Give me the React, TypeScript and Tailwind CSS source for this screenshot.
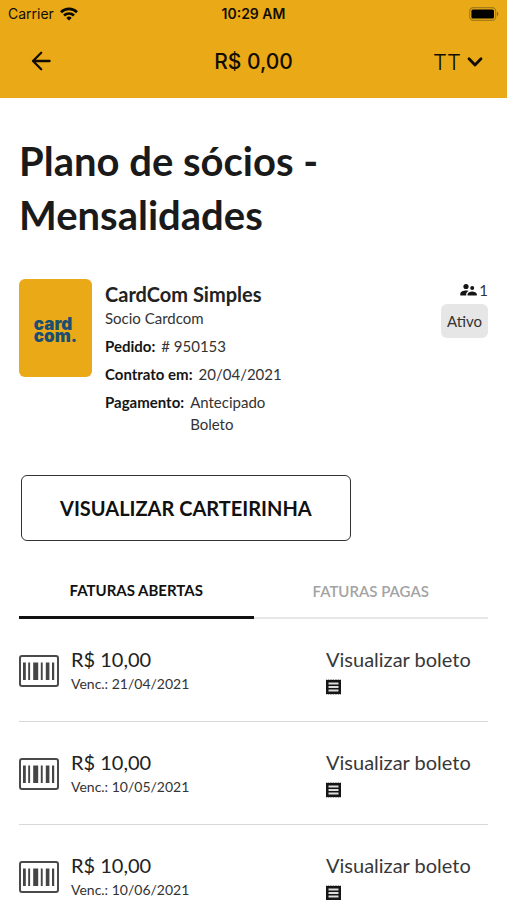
import { useState } from "react";

type Invoice = { amount: string; due: string };

const openInvoices: Invoice[] = [
  { amount: "R$ 10,00", due: "21/04/2021" },
  { amount: "R$ 10,00", due: "10/05/2021" },
  { amount: "R$ 10,00", due: "10/06/2021" },
];

function WifiIcon() {
  return (
    <svg width="18" height="14" viewBox="0 0 18 14" fill="none" stroke="#0c0902" strokeWidth="2.7" aria-hidden="true">
      <path d="M1 5.2a11.4 11.4 0 0 1 16 0" />
      <path d="M4 8.5a7.2 7.2 0 0 1 10 0" />
      <path d="M9 13.6 6.3 10.9a3.9 3.9 0 0 1 5.4 0z" fill="#0c0902" stroke="none" />
    </svg>
  );
}

function BatteryIcon() {
  return (
    <svg width="30" height="14" viewBox="0 0 30 14" fill="none" aria-hidden="true">
      <rect x="0.7" y="0.7" width="26" height="12.6" rx="3.6" stroke="#a67c18" strokeWidth="1.2" />
      <rect x="2.4" y="2.4" width="22.6" height="9.2" rx="1.6" fill="#000" />
      <path d="M28 4.8c1.7.6 1.7 3.8 0 4.4z" fill="#8d6a17" />
    </svg>
  );
}

function BackIcon() {
  return (
    <svg width="20" height="20" viewBox="0 0 20 20" fill="none" stroke="#120d02" strokeWidth="2.3" strokeLinecap="round" strokeLinejoin="round" aria-hidden="true">
      <path d="M10.2 1.8 2 10l8.2 8.2M2 10h16.6" />
    </svg>
  );
}

function ChevronIcon() {
  return (
    <svg width="16" height="12" viewBox="0 0 16 12" fill="none" stroke="#120d02" strokeWidth="2.8" strokeLinecap="round" strokeLinejoin="round" aria-hidden="true">
      <path d="m2 2.8 6 6.2 6-6.2" />
    </svg>
  );
}

function PeopleIcon() {
  return (
    <svg width="17" height="14" viewBox="0 0 17 14" fill="#151515" aria-hidden="true">
      <circle cx="6" cy="3.5" r="2.6" />
      <circle cx="12.2" cy="4.9" r="2" />
      <path d="M.3 12.6v-1.7C.3 8.8 3.6 7.6 6 7.6c.9 0 1.8.1 2.6.4-1.6.9-2.4 1.8-2.4 3.1v1.5z" />
      <path d="M7.6 12.6v-1.3c0-1.8 2.7-2.8 4.6-2.8s4.6 1 4.6 2.8v1.3z" />
    </svg>
  );
}

function ReceiptIcon() {
  return (
    <svg width="15" height="16" viewBox="0 0 15 16" className="mt-2" aria-hidden="true">
      <path
        fill="#151515"
        d="M0 .4 1.2 1 2.5.4l1.2.6L5 .4l1.2.6L7.5.4l1.2.6L10 .4l1.2.6 1.3-.6 1.3.6L15 .4v15.2l-1.2-.6-1.3.6-1.3-.6-1.2.6-1.3-.6-1.2.6-1.3-.6-1.2.6-1.3-.6-1.2.6-1.3-.6-1.2.6z"
      />
      <path fill="#ddd" d="M2.5 3.6h10v2h-10zM2.5 7h10v2h-10zM2.5 10.4h10v2h-10z" />
    </svg>
  );
}

function BarcodeIcon() {
  return (
    <svg width="40" height="32" viewBox="0 0 40 32" className="mt-2 shrink-0" aria-hidden="true">
      <rect x="1" y="1" width="38" height="30" rx="2" fill="#fff" stroke="#4a4a4a" strokeWidth="2" />
      <g fill="#454545">
        <rect x="4" y="7.5" width="2.8" height="17.5" />
        <rect x="9.2" y="7.5" width="1.9" height="17.5" />
        <rect x="14.2" y="7.5" width="5" height="17.5" />
        <rect x="21.8" y="7.5" width="1.9" height="17.5" />
        <rect x="26.8" y="7.5" width="3.6" height="17.5" />
        <rect x="33" y="7.5" width="2.2" height="17.5" />
      </g>
    </svg>
  );
}

function Detail({ label, children }: { label: string; children: React.ReactNode }) {
  return (
    <div className="flex gap-1.5">
      <dt className="font-bold text-[#151515]">{label}</dt>
      <dd>{children}</dd>
    </div>
  );
}

function InvoiceRow({ invoice }: { invoice: Invoice }) {
  return (
    <li className="flex items-start border-b border-[#d8d8d8] pt-7 pb-6">
      <BarcodeIcon />
      <div className="ml-3 flex-1">
        <p className="text-xl leading-6 text-[#222]">{invoice.amount}</p>
        <p className="text-sm leading-[26px]">Venc.: {invoice.due}</p>
      </div>
      <a href="#boleto" className="flex w-[162px] flex-col text-xl leading-6 text-[#383838]">
        Visualizar boleto
        <ReceiptIcon />
      </a>
    </li>
  );
}

export default function App() {
  const [tab, setTab] = useState<"open" | "paid">("open");
  const tabClass = (active: boolean) =>
    active
      ? "flex-1 border-b-3 border-[#111] text-[#111] font-bold"
      : "flex-1 border-b-2 border-[#e6e6e6] text-[#a3a3a3] font-semibold";

  return (
    <div className="min-h-screen bg-white font-['Lato','Noto_Sans',sans-serif] text-[#333]">
      <header className="bg-[#eaaa17] font-['Inter','Liberation_Sans',sans-serif] text-[#120d02]">
        <div className="grid h-7 grid-cols-[1fr_auto_1fr] items-center px-2 text-sm">
          <span className="flex items-center gap-1.5">
            Carrier <WifiIcon />
          </span>
          <span className="font-semibold">10:29 AM</span>
          <span className="flex justify-end">
            <BatteryIcon />
          </span>
        </div>
        <div className="grid h-[70px] grid-cols-[1fr_auto_1fr] items-center px-6 pb-1">
          <button type="button" aria-label="Voltar" className="justify-self-start pl-[7px]">
            <BackIcon />
          </button>
          <p className="pt-0.5 text-[21px] font-medium">R$ 0,00</p>
          <button type="button" className="flex items-center gap-1.5 justify-self-end pt-0.5 text-[22px] font-light">
            TT <ChevronIcon />
          </button>
        </div>
      </header>

      <main className="px-[19px] pt-9">
        <h1 className="max-w-[340px] text-[40px] leading-[54px] font-bold text-[#1a1a1a]">
          Plano de sócios - Mensalidades
        </h1>

        <section className="mt-[37px] flex items-start">
          <div className="flex h-[98px] w-[73px] shrink-0 items-center justify-center rounded-md bg-[#eaaa17]">
            <p className="pt-1 font-['Inter',sans-serif] text-[17px] leading-3 font-black text-[#1c4e70]">
              card
              <br />
              com.
            </p>
          </div>
          <div className="ml-[13px] flex-1 text-[15px] leading-[22px]">
            <h2 className="mt-0.5 text-xl leading-[26px] font-bold text-[#222]">CardCom Simples</h2>
            <p>Socio Cardcom</p>
            <dl className="mt-1.5 flex flex-col gap-1.5">
              <Detail label="Pedido:"># 950153</Detail>
              <Detail label="Contrato em:">20/04/2021</Detail>
              <Detail label="Pagamento:">
                Antecipado
                <br />
                Boleto
              </Detail>
            </dl>
          </div>
          <div className="flex flex-col items-end">
            <p className="flex items-center gap-0.5 text-[15px] leading-[22px]">
              <PeopleIcon />1
            </p>
            <span className="mt-[3px] rounded-md bg-[#e6e6e6] px-1.5 py-1.5 text-[15px] leading-[22px]">Ativo</span>
          </div>
        </section>

        <button
          type="button"
          className="mt-10 ml-0.5 h-[66px] rounded-md border border-[#333] px-[38px] text-xl font-bold text-[#111]"
        >
          VISUALIZAR CARTEIRINHA
        </button>

        <div role="tablist" className="mt-6 flex h-[54px] items-stretch text-[15px]">
          <button type="button" role="tab" aria-selected={tab === "open"} onClick={() => setTab("open")} className={tabClass(tab === "open")}>
            FATURAS ABERTAS
          </button>
          <button type="button" role="tab" aria-selected={tab === "paid"} onClick={() => setTab("paid")} className={tabClass(tab === "paid")}>
            FATURAS PAGAS
          </button>
        </div>

        <ul>
          {(tab === "open" ? openInvoices : []).map((invoice) => (
            <InvoiceRow key={invoice.due} invoice={invoice} />
          ))}
        </ul>
      </main>
    </div>
  );
}
